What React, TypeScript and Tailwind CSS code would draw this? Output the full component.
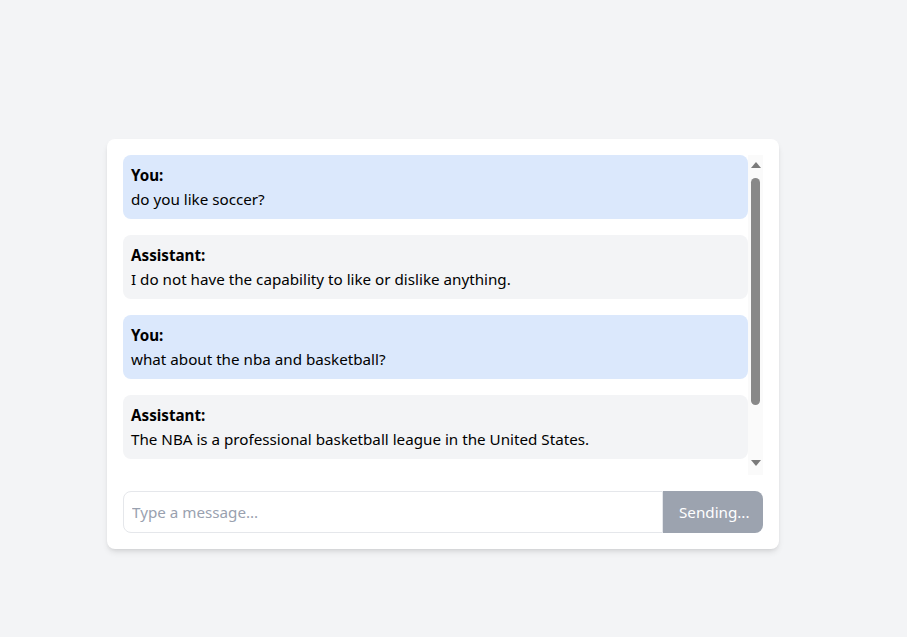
import React, { useState } from "react";

interface Message {
  role: "user" | "assistant";
  content: string;
}

const messages: Message[] = [
  { role: "user", content: "do you like soccer?" },
  { role: "assistant", content: "I do not have the capability to like or dislike anything." },
  { role: "user", content: "what about the nba and basketball?" },
  { role: "assistant", content: "The NBA is a professional basketball league in the United States." },
];

const App: React.FC = () => {
  const [input, setInput] = useState("");

  return (
    <div
      className="min-h-screen bg-[#f3f4f6] pt-[139px] pl-[107px]"
      style={{ fontFamily: '"Noto Sans", "Open Sans", sans-serif' }}
    >
      <div className="w-[672px] rounded-lg bg-white p-4 shadow-md">
        {/* Messages + scrollbar */}
        <div className="flex h-[320px]">
          <div className="flex-1 space-y-4 overflow-y-auto [scrollbar-width:none]">
            {messages.map((m, i) => (
              <div
                key={i}
                className={`rounded-lg p-2 text-[15.2px] leading-6 text-black ${
                  m.role === "user" ? "bg-[#dbe8fc]" : "bg-[#f3f4f6]"
                }`}
              >
                <div className="font-bold">{m.role === "user" ? "You:" : "Assistant:"}</div>
                <div>{m.content}</div>
              </div>
            ))}
          </div>
          <div className="flex w-[15px] flex-col items-center bg-[#fafafa] pt-[7px] pb-[9px]">
            <div className="h-0 w-0 border-x-[5px] border-b-[6px] border-x-transparent border-b-[#7a7a7a]" />
            <div className="mt-[10px] h-[227px] w-[9px] rounded-full bg-[#888888]" />
            <div className="flex-1" />
            <div className="h-0 w-0 border-x-[5px] border-t-[6px] border-x-transparent border-t-[#7a7a7a]" />
          </div>
        </div>

        {/* Input */}
        <div className="mt-4 flex">
          <input
            type="text"
            value={input}
            onChange={(e) => setInput(e.target.value)}
            placeholder="Type a message..."
            className="min-w-0 flex-1 rounded-l-lg border border-gray-200 px-2 py-2 text-[15.2px] leading-6 text-black placeholder:text-gray-400 focus:outline-none"
          />
          <button
            disabled
            className="w-[100px] rounded-r-lg bg-[#9ca3af] px-4 py-2 text-[15.2px] leading-6 text-white"
          >
            Sending...
          </button>
        </div>
      </div>
    </div>
  );
};

export default App;
